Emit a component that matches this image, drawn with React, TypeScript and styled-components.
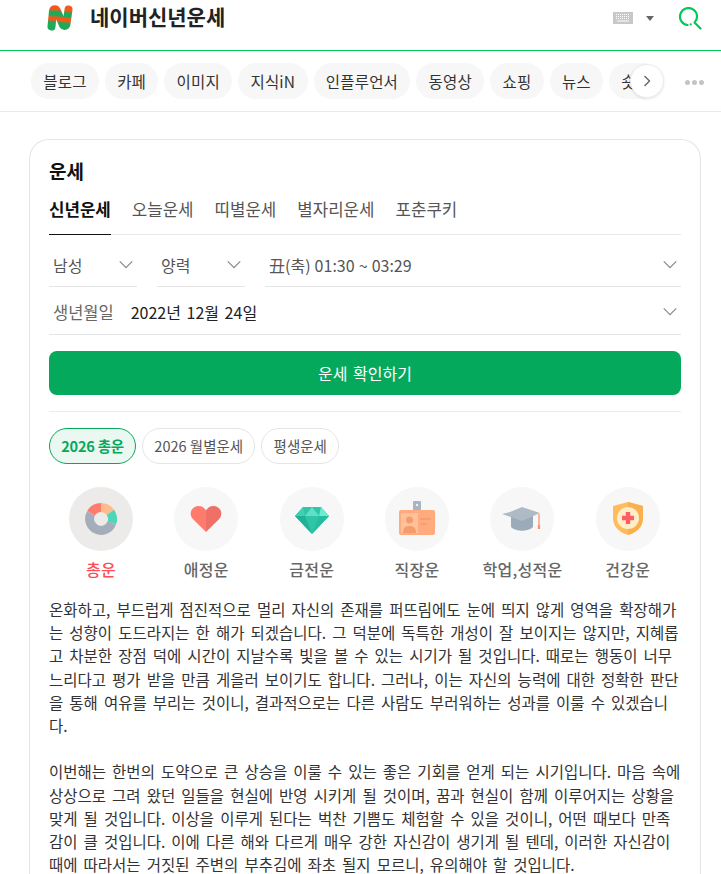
import React from "react";
import styled, { createGlobalStyle } from "styled-components";

const GlobalStyle = createGlobalStyle`
  html, body {
    margin: 0;
    padding: 0;
    background: #fff;
    font-family: "Noto Sans CJK KR", "Liberation Sans", sans-serif;
    color: #222;
  }
  * { box-sizing: border-box; }
`;

const Page = styled.div`
  width: 721px;
  height: 874px;
  overflow: hidden;
`;

// ----------------------------------------------------------------------

const Header = styled.header`
  height: 51px;
  display: flex;
  align-items: center;
  padding: 0 19px 14px 47px;
  border-bottom: 1px solid #03c75a;
`;

const Title = styled.h1`
  margin: 0 0 0 17px;
  padding-bottom: 3px;
  font-size: 21px;
  line-height: 33px;
  font-weight: 700;
  color: #222;
  flex: 1;
`;

const Caret = styled.span`
  width: 0;
  height: 0;
  margin: 0 25px 0 13px;
  border-left: 4px solid transparent;
  border-right: 4px solid transparent;
  border-top: 5px solid #666;
`;

const TabBar = styled.nav`
  position: relative;
  height: 61px;
  padding: 12px 0 0 31px;
  border-bottom: 1px solid #ebebeb;
`;

const PillTrack = styled.div`
  width: 615px;
  display: flex;
  gap: 6px;
  overflow: hidden;
`;

const Pill = styled.a`
  flex: none;
  height: 36px;
  padding: 0 12.25px;
  border-radius: 18px;
  background: #f7f7f7;
  font-size: 15.5px;
  letter-spacing: 0.2px;
  line-height: 36px;
  color: #333;
`;

const NextButton = styled.button`
  position: absolute;
  left: 630px;
  top: 13px;
  width: 34px;
  height: 34px;
  padding: 0;
  border: 1px solid #ececec;
  border-radius: 50%;
  background: #fff;
  box-shadow: 0 1px 3px rgba(0, 0, 0, 0.1);
  display: flex;
  align-items: center;
  justify-content: center;
`;

const MoreDots = styled.div`
  position: absolute;
  left: 685px;
  top: 29px;
  display: flex;
  gap: 2px;
  span {
    width: 5px;
    height: 5px;
    border-radius: 50%;
    background: #c4c4c4;
  }
`;

const Main = styled.main`
  padding: 27px 20px 0 29px;
`;

const Card = styled.section`
  border: 1px solid #e5e5e5;
  border-bottom: 0;
  border-radius: 20px 20px 0 0;
  padding: 17px 19px 0 19px;
`;

const CardTitle = styled.h2`
  margin: 0;
  font-size: 19px;
  line-height: 28px;
  font-weight: 700;
  color: #111;
`;

const FortuneTabs = styled.div`
  margin-top: 6px;
  height: 44px;
  display: flex;
  gap: 21px;
  border-bottom: 1px solid #e8e8e8;
`;

const FortuneTab = styled.a<{ $active?: boolean }>`
  height: 44px;
  font-size: 16.8px;
  line-height: 36px;
  font-weight: ${({ $active }) => ($active ? 700 : 400)};
  color: ${({ $active }) => ($active ? "#111" : "#555")};
  border-bottom: ${({ $active }) => ($active ? "1px solid #111" : "0")};
`;

const SelectRow = styled.div`
  display: flex;
  gap: 20px;
`;

const Select = styled.div<{ $width?: number }>`
  height: 52px;
  display: flex;
  align-items: center;
  justify-content: space-between;
  flex: ${({ $width }) => ($width ? `0 0 ${$width}px` : "1")};
  padding: 9px 3px 0 4px;
  font-size: 16px;
  word-spacing: 0.5px;
  color: #555;
  border-bottom: 1px solid #e5e5e5;
`;

const DateSelect = styled(Select)`
  height: 48px;
  flex: none;
  padding-top: 3px;
`;

const DateLabel = styled.span`
  font-size: 16.5px;
  color: #666;
  margin-right: 17px;
`;

const DateValue = styled.span`
  flex: 1;
  color: #222;
  word-spacing: 2px;
`;

const ConfirmButton = styled.button`
  display: block;
  width: 100%;
  height: 44px;
  margin-top: 16px;
  border: 0;
  border-radius: 8px;
  background: #05a95c;
  color: #fff;
  font-family: inherit;
  font-size: 16px;
  word-spacing: 2px;
`;

const Divider = styled.hr`
  margin: 16px 0 16px;
  height: 1px;
  border: 0;
  background: #ebebeb;
`;

const ChipRow = styled.div`
  display: flex;
  gap: 6px;
`;

const Chip = styled.a<{ $active?: boolean }>`
  height: 36px;
  padding: 0 11.2px;
  border-radius: 18px;
  font-size: 14.5px;
  line-height: 34px;
  letter-spacing: ${({ $active }) => ($active ? "-0.2px" : "0")};
  font-weight: ${({ $active }) => ($active ? 700 : 400)};
  color: ${({ $active }) => ($active ? "#05a95c" : "#555")};
  background: ${({ $active }) => ($active ? "#ebf7f1" : "#fff")};
  border: 1px solid ${({ $active }) => ($active ? "#05a95c" : "#e5e5e5")};
`;

const CategoryRow = styled.div`
  margin: 23px 0 0 -0.8px;
  display: flex;
  justify-content: flex-start;
`;

const Category = styled.a`
  flex: 0 0 105.4px;
  display: flex;
  flex-direction: column;
  align-items: center;
`;

const CategoryIcon = styled.span<{ $active?: boolean }>`
  width: 64px;
  height: 64px;
  border-radius: 50%;
  background: ${({ $active }) => ($active ? "#edebe9" : "#f7f7f7")};
  display: flex;
  align-items: center;
  justify-content: center;
`;

const CategoryLabel = styled.span<{ $active?: boolean }>`
  margin-top: 6px;
  font-size: 16px;
  line-height: 24px;
  letter-spacing: 0.3px;
  white-space: nowrap;
  font-weight: 500;
  color: ${({ $active }) => ($active ? "#ff4d55" : "#666")};
`;

const Body = styled.div`
  margin-top: 17px;
`;

const BodyLine = styled.div`
  min-height: 23.2px;
  font-size: 15.5px;
  line-height: 23.2px;
  word-spacing: 2.6px;
  white-space: nowrap;
  color: #333;
`;

// ----------------------------------------------------------------------

const Logo = () => (
  <svg width="26" height="26" viewBox="0 0 26 26">
    <defs>
      <linearGradient id="logoStroke" x1="0.1" y1="0" x2="0" y2="1">
        <stop offset="0" stopColor="#f5591a" />
        <stop offset="0.14" stopColor="#1faa59" />
        <stop offset="0.34" stopColor="#1faa59" />
        <stop offset="0.46" stopColor="#f5591a" />
        <stop offset="0.62" stopColor="#f5591a" />
        <stop offset="0.74" stopColor="#1faa59" />
        <stop offset="1" stopColor="#1faa59" />
      </linearGradient>
    </defs>
    <path
      d="M4.5 21.5 L6 6 C6.5 3.5 9 3.5 10 6 L15.5 19 C16.5 21.5 19 21.5 19.5 19 L21.5 4.5"
      fill="none"
      stroke="url(#logoStroke)"
      strokeWidth="8"
      strokeLinecap="round"
      strokeLinejoin="round"
    />
  </svg>
);

const KeyboardIcon = () => (
  <svg width="20" height="12" viewBox="0 0 20 12">
    <rect width="20" height="12" fill="#c8c8c8" />
    <path
      d="M3 2.5h14M3 4.5h14M3 6.5h14"
      stroke="#fff"
      strokeWidth="1"
      strokeDasharray="1 1"
    />
    <path d="M4 9h12" stroke="#fff" strokeWidth="1" />
  </svg>
);

const SearchIcon = () => (
  <svg width="23" height="23" viewBox="0 0 23 23" fill="none">
    <path
      d="M8.5 18 A8.5 8.5 0 1 1 15.6 15.5"
      stroke="#03c75a"
      strokeWidth="2.2"
      strokeLinecap="round"
    />
    <path d="M16 16 L21.5 21.5" stroke="#03c75a" strokeWidth="2.2" strokeLinecap="round" />
    <circle cx="11.7" cy="17.4" r="1.1" fill="#03c75a" />
  </svg>
);

const Chevron = ({ size = 16 }: { size?: number }) => (
  <svg width={size} height={size * 0.6} viewBox="0 0 16 10" fill="none">
    <path d="M1.5 1.5 L8 8 L14.5 1.5" stroke="#888" strokeWidth="1.2" />
  </svg>
);

const DonutIcon = () => (
  <svg width="32" height="32" viewBox="0 0 32 32">
    <g fill="none" strokeWidth="9">
      <path d="M16 4.5 A11.5 11.5 0 0 1 25.4 9.4" stroke="#ffbb8d" />
      <path d="M25.4 9.4 A11.5 11.5 0 0 1 26.8 20" stroke="#4fd6b8" />
      <path d="M26.8 20 A11.5 11.5 0 1 1 6 10.3" stroke="#a3aeba" />
      <path d="M6 10.3 A11.5 11.5 0 0 1 16 4.5" stroke="#ff7b6e" />
    </g>
  </svg>
);

const HeartIcon = () => (
  <svg width="32" height="28" viewBox="0 0 34 30" preserveAspectRatio="none">
    <path d="M17 29 L3 15 C-2 9 2 1 9 1 C13 1 15.5 3 17 6 Z" fill="#ff7b6e" />
    <path d="M17 29 L31 15 C36 9 32 1 25 1 C21 1 18.5 3 17 6 Z" fill="#ee7066" />
  </svg>
);

const GemIcon = () => (
  <svg width="36" height="30" viewBox="0 -3 36 30">
    <path d="M9 0 H27 L35 9 L18 27 L1 9 Z" fill="#2fc6a8" />
    <path d="M1 9 L18 27 L11 9 Z" fill="#1eb396" />
    <path d="M25 9 L18 27 L35 9 Z" fill="#27bc9e" />
    <path d="M9 0 L11 9 H1 Z" fill="#3fcfb2" />
    <path d="M18 0 L11 9 H25 Z" fill="#5fe0c4" />
    <path d="M27 0 L25 9 H35 Z" fill="#6eeccf" />
  </svg>
);

const BadgeIcon = () => (
  <svg width="38" height="36" viewBox="0 0 38 36">
    <rect x="15" y="0" width="8" height="12" rx="1" fill="#a8b4c0" />
    <circle cx="19" cy="4" r="1.2" fill="#eef" />
    <rect x="1" y="9" width="36" height="25" rx="2" fill="#ffab7d" />
    <rect x="3" y="12" width="17" height="20" fill="#ffc19c" />
    <circle cx="11.5" cy="19" r="3.5" fill="#f59c6c" />
    <path d="M5 32 C5 26 8 25 11.5 25 C15 25 18 26 18 32 Z" fill="#f59c6c" />
    <path d="M22 18 H33 M22 23 H29" stroke="#f59c6c" strokeWidth="1.5" />
  </svg>
);

const CapIcon = () => (
  <svg width="40" height="26" viewBox="0 0 40 26">
    <path d="M9 10 V21 C14 26 26 26 31 21 V10 Z" fill="#9cabb9" />
    <path d="M0 8 L8 6 L20 1 L38 7 L20 15 Z" fill="#aebbc7" />
    <path d="M37 8 V20" stroke="#ff9a70" strokeWidth="1.4" />
    <path d="M37 19 V23" stroke="#ff8f60" strokeWidth="2.2" />
  </svg>
);

const ShieldIcon = () => (
  <svg width="32" height="34" viewBox="0 0 32 34">
    <path d="M16 0 L31 4 V16 C31 25 24 31 16 33 C8 31 1 25 1 16 V4 Z" fill="#ffbc5e" />
    <path d="M16 0 L31 4 V16 C31 25 24 31 16 33 Z" fill="#f9b04d" />
    <circle cx="16" cy="16" r="11" fill="#ffeec8" />
    <path d="M16 10 V22 M10 16 H22" stroke="#ff5f64" strokeWidth="4.4" />
  </svg>
);

// ----------------------------------------------------------------------

const PILLS = ["블로그", "카페", "이미지", "지식iN", "인플루언서", "동영상", "쇼핑", "뉴스", "숏텐츠"];

const FORTUNE_TABS = ["신년운세", "오늘운세", "띠별운세", "별자리운세", "포춘쿠키"];

const CHIPS = ["2026 총운", "2026 월별운세", "평생운세"];

const CATEGORIES = [
  { label: "총운", icon: <DonutIcon /> },
  { label: "애정운", icon: <HeartIcon /> },
  { label: "금전운", icon: <GemIcon /> },
  { label: "직장운", icon: <BadgeIcon /> },
  { label: "학업,성적운", icon: <CapIcon /> },
  { label: "건강운", icon: <ShieldIcon /> },
];

const BODY_LINES = [
  "온화하고, 부드럽게 점진적으로 멀리 자신의 존재를 퍼뜨림에도 눈에 띄지 않게 영역을 확장해가",
  "는 성향이 도드라지는 한 해가 되겠습니다. 그 덕분에 독특한 개성이 잘 보이지는 않지만, 지혜롭",
  "고 차분한 장점 덕에 시간이 지날수록 빛을 볼 수 있는 시기가 될 것입니다. 때로는 행동이 너무",
  "느리다고 평가 받을 만큼 게을러 보이기도 합니다. 그러나, 이는 자신의 능력에 대한 정확한 판단",
  "을 통해 여유를 부리는 것이니, 결과적으로는 다른 사람도 부러워하는 성과를 이룰 수 있겠습니",
  "다.",
  "",
  "이번해는 한번의 도약으로 큰 상승을 이룰 수 있는 좋은 기회를 얻게 되는 시기입니다. 마음 속에",
  "상상으로 그려 왔던 일들을 현실에 반영 시키게 될 것이며, 꿈과 현실이 함께 이루어지는 상황을",
  "맞게 될 것입니다. 이상을 이루게 된다는 벅찬 기쁨도 체험할 수 있을 것이니, 어떤 때보다 만족",
  "감이 클 것입니다. 이에 다른 해와 다르게 매우 강한 자신감이 생기게 될 텐데, 이러한 자신감이",
  "때에 따라서는 거짓된 주변의 부추김에 좌초 될지 모르니, 유의해야 할 것입니다.",
];

export default function App() {
  return (
    <Page>
      <GlobalStyle />
      <Header>
        <Logo />
        <Title>네이버신년운세</Title>
        <KeyboardIcon />
        <Caret />
        <SearchIcon />
      </Header>
      <TabBar>
        <PillTrack>
          {PILLS.map((p) => (
            <Pill key={p}>{p}</Pill>
          ))}
        </PillTrack>
        <NextButton aria-label="다음">
          <svg width="8" height="12" viewBox="0 0 8 12" fill="none">
            <path d="M1.5 1 L6.5 6 L1.5 11" stroke="#666" strokeWidth="1.4" />
          </svg>
        </NextButton>
        <MoreDots>
          <span />
          <span />
          <span />
        </MoreDots>
      </TabBar>
      <Main>
        <Card>
          <CardTitle>운세</CardTitle>
          <FortuneTabs>
            {FORTUNE_TABS.map((t, i) => (
              <FortuneTab key={t} $active={i === 0}>
                {t}
              </FortuneTab>
            ))}
          </FortuneTabs>
          <SelectRow>
            <Select $width={88}>
              남성
              <Chevron />
            </Select>
            <Select $width={88}>
              양력
              <Chevron />
            </Select>
            <Select>
              丑(축) 01:30 ~ 03:29
              <Chevron />
            </Select>
          </SelectRow>
          <DateSelect>
            <DateLabel>생년월일</DateLabel>
            <DateValue>2022년 12월 24일</DateValue>
            <Chevron />
          </DateSelect>
          <ConfirmButton>운세 확인하기</ConfirmButton>
          <Divider />
          <ChipRow>
            {CHIPS.map((c, i) => (
              <Chip key={c} $active={i === 0}>
                {c}
              </Chip>
            ))}
          </ChipRow>
          <CategoryRow>
            {CATEGORIES.map((c, i) => (
              <Category key={c.label}>
                <CategoryIcon $active={i === 0}>{c.icon}</CategoryIcon>
                <CategoryLabel $active={i === 0}>{c.label}</CategoryLabel>
              </Category>
            ))}
          </CategoryRow>
          <Body>
            {BODY_LINES.map((line, i) => (
              <BodyLine key={i}>{line}</BodyLine>
            ))}
          </Body>
        </Card>
      </Main>
    </Page>
  );
}
